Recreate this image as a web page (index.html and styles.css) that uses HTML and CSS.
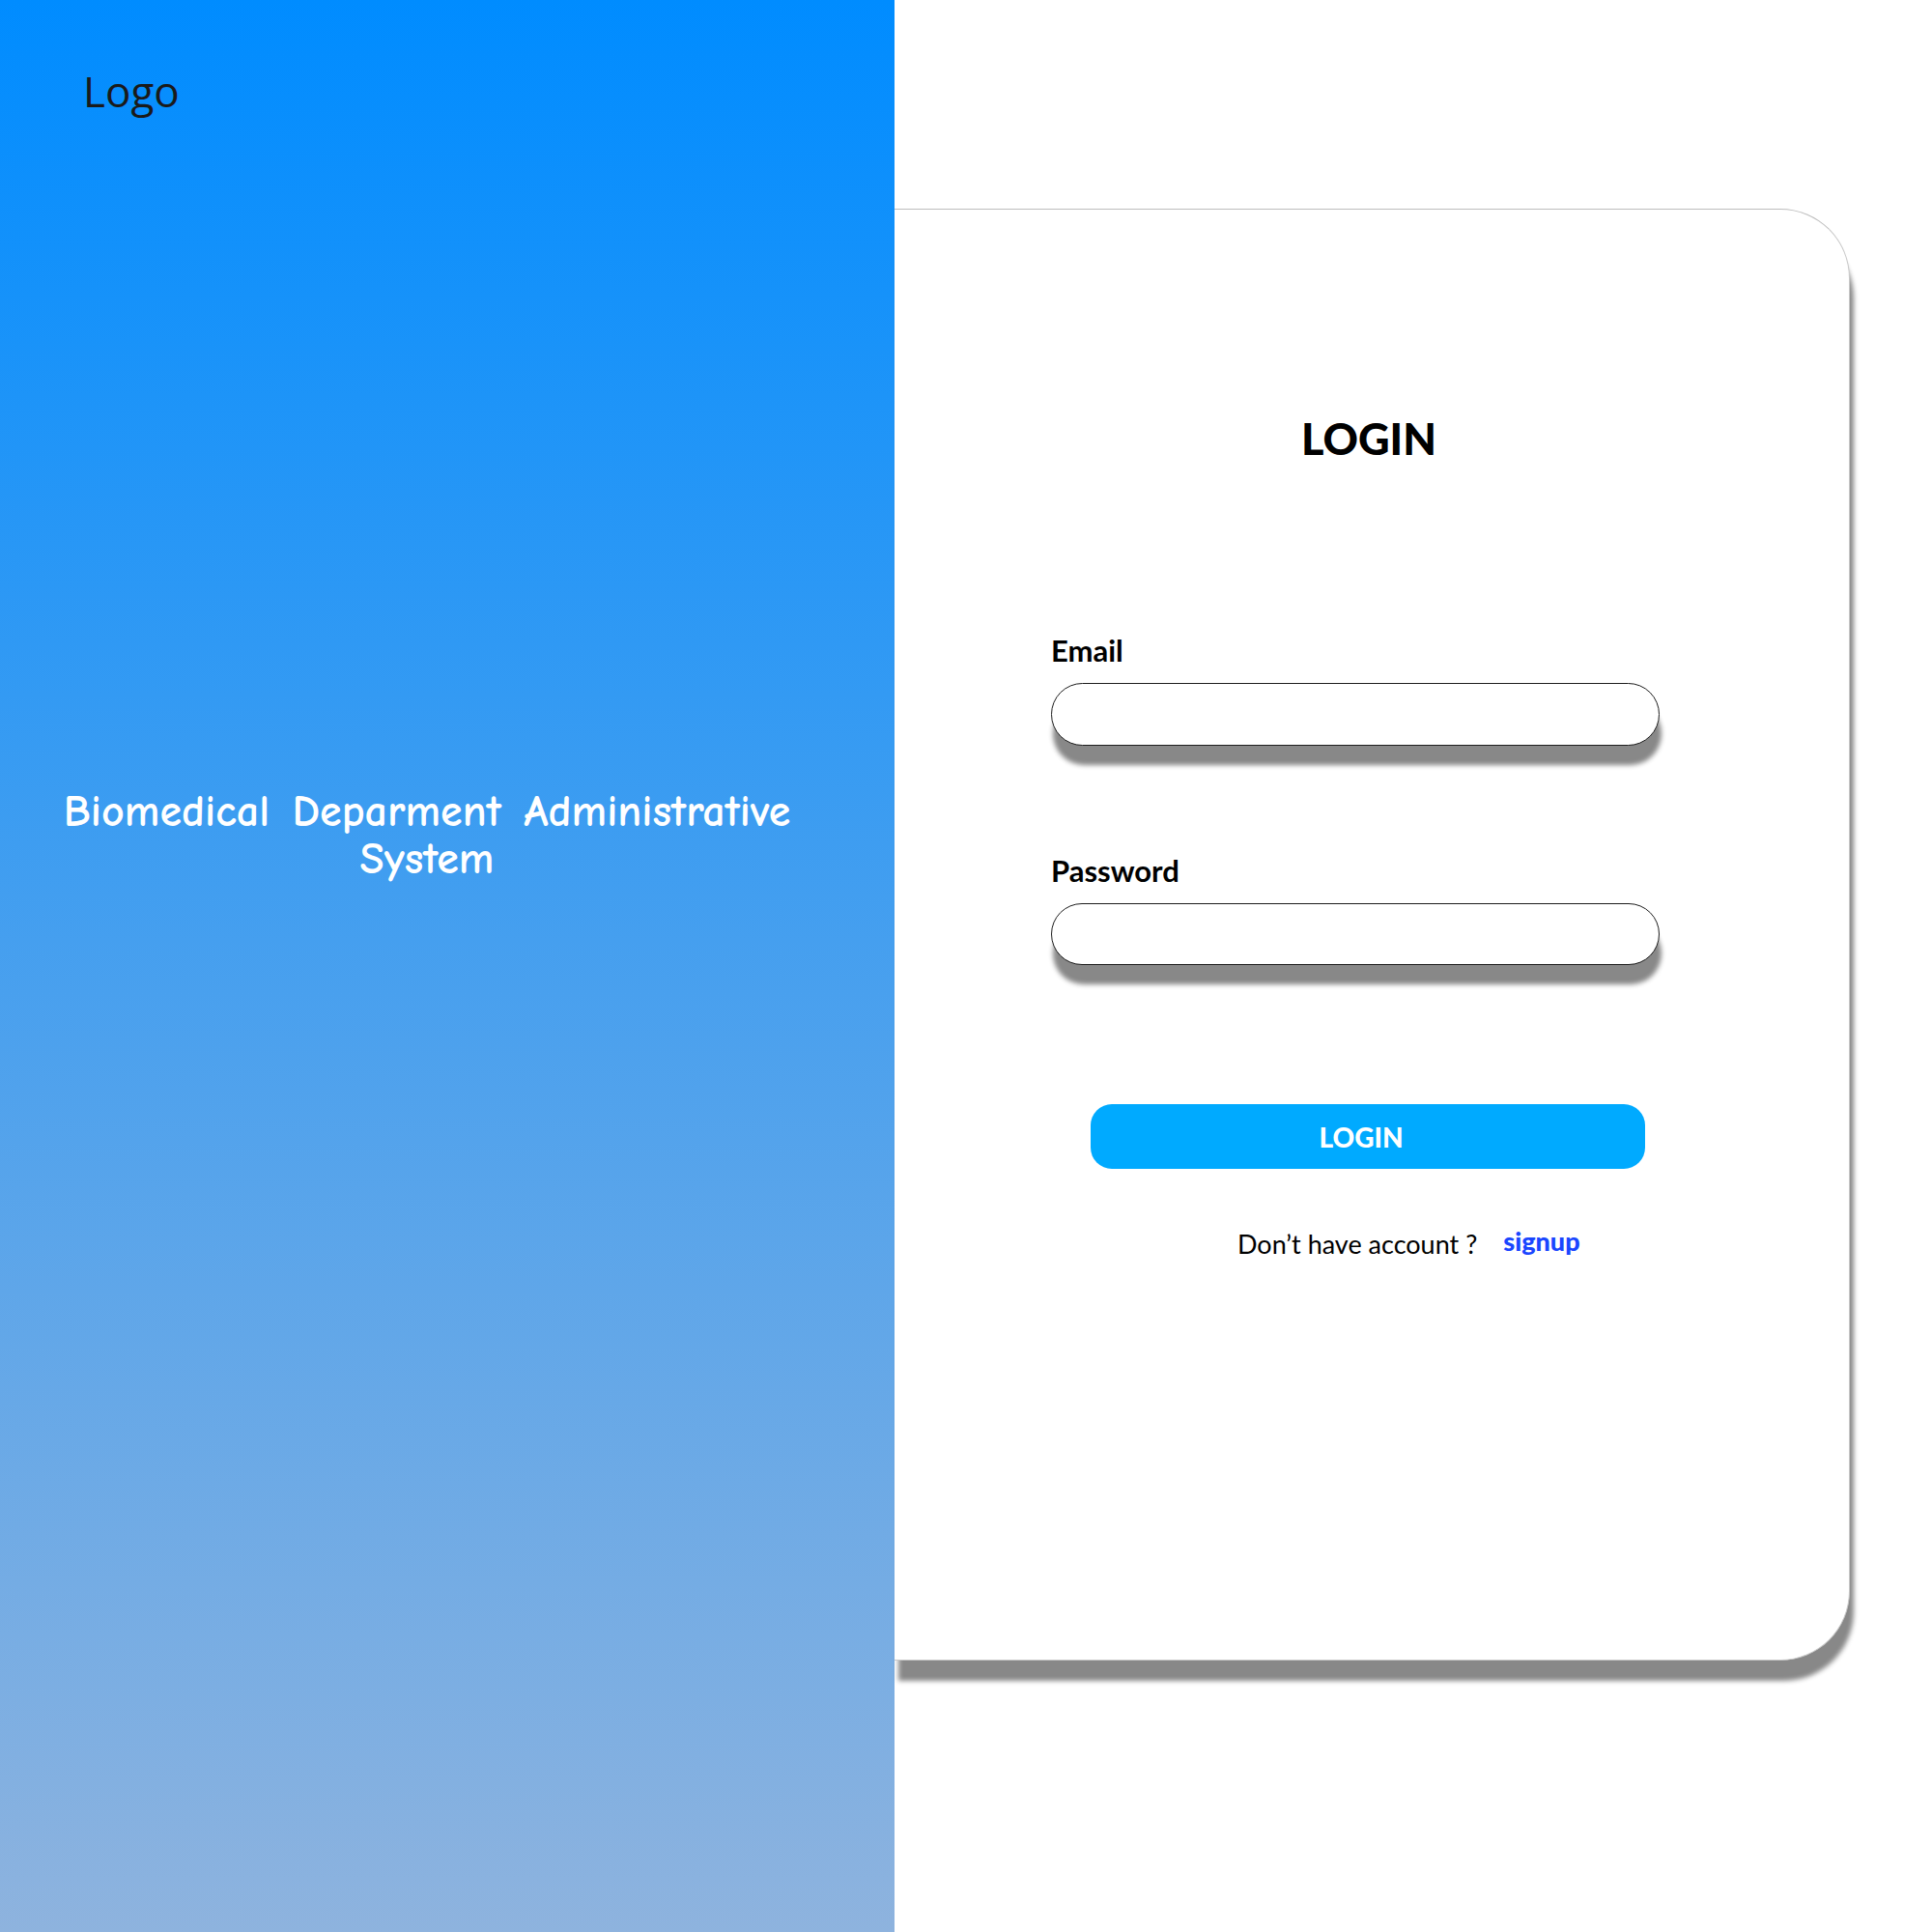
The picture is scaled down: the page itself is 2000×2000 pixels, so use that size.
FILE: index.html
```html
<!DOCTYPE html>
<html lang="en">
<head>
<meta charset="utf-8">
<title>Login</title>
<link rel="stylesheet" href="styles.css">
</head>
<body>
<div class="page">
  <aside class="side">
    <div class="logo">Logo</div>
    <h1 class="system">Biomedical Deparment Administrative System</h1>
  </aside>
  <main class="main">
    <section class="card">
      <h2 class="card-title">LOGIN</h2>
      <form class="form">
        <label class="label" for="email">Email</label>
        <input class="field field-email" id="email" type="text">
        <label class="label" for="password">Password</label>
        <input class="field field-password" id="password" type="password">
        <button class="btn" type="button">LOGIN</button>
        <div class="footer">
          <span class="question">Don’t have account ?</span>
          <a class="signup" href="#">signup</a>
        </div>
      </form>
    </section>
  </main>
</div>
</body>
</html>
```
FILE: styles.css
```css
* { box-sizing: border-box; }
html, body { margin: 0; padding: 0; background: #fff; }
body { font-family: "Lato", "Open Sans", sans-serif; }

.page {
  display: flex;
  width: 2000px;
  height: 2000px;
}

.side {
  width: 926px;
  flex: none;
  height: 2000px;
  background: linear-gradient(to bottom, #008cff 0%, #8eb3de 100%);
  display: flex;
  flex-direction: column;
}

.logo {
  font-family: "Open Sans", "Lato", sans-serif;
  font-size: 44px;
  line-height: 1;
  color: #1a1a1a;
  margin: 72px 0 0 86px;
}

.system {
  width: 790px;
  margin: 700px 0 0 47px;
  font-family: "Comic Sans MS", "Comic Neue", cursive;
  font-weight: bold;
  font-size: 46px;
  line-height: 49px;
  color: #fff;
  text-align: center;
  word-spacing: 7px;
}

.main {
  flex: 1;
  padding-top: 216px;
}

.card {
  width: 989px;
  height: 1503px;
  background: #fff;
  border-top: 1px solid #bdbdbd;
  border-right: 1px solid #c8c8c8;
  border-bottom: 1px solid #c8c8c8;
  border-radius: 0 72px 72px 0;
  box-shadow: 4px 21px 5px #888;
  padding-top: 215px;
}

.card-title {
  margin: 0;
  padding-right: 6px;
  font-size: 45px;
  line-height: 1;
  font-weight: 900;
  text-align: center;
  color: #000;
}

.form {
  display: flex;
  flex-direction: column;
  align-items: flex-start;
  padding-left: 162px;
  margin-top: 181px;
}

.label {
  font-size: 31px;
  line-height: 1;
  font-weight: bold;
  color: #000;
  margin-bottom: 18px;
}

.field {
  width: 630px;
  height: 65px;
  border: 1.5px solid #1e1e1e;
  border-radius: 33px;
  background: #fff;
  box-shadow: 2px 20px 5px #888;
  outline: none;
  font: inherit;
}

.field-email { margin-bottom: 114px; }
.field-password { height: 64px; margin-bottom: 144px; }

.btn {
  width: 574px;
  height: 67px;
  margin-left: 41px;
  border: none;
  border-radius: 22px;
  background: #00aaff;
  color: #fff;
  font-family: "Lato", sans-serif;
  font-size: 28px;
  font-weight: 900;
  line-height: 1;
  padding: 0 14px 0 0;
  margin-bottom: 64px;
}

.footer {
  display: flex;
  align-items: baseline;
  margin-left: 193px;
  font-size: 27px;
  line-height: 1;
}

.question { color: #000; }

.signup {
  margin-left: 27px;
  color: #1a46ff;
  font-weight: 900;
  text-decoration: none;
  position: relative;
  top: -3px;
}
```
